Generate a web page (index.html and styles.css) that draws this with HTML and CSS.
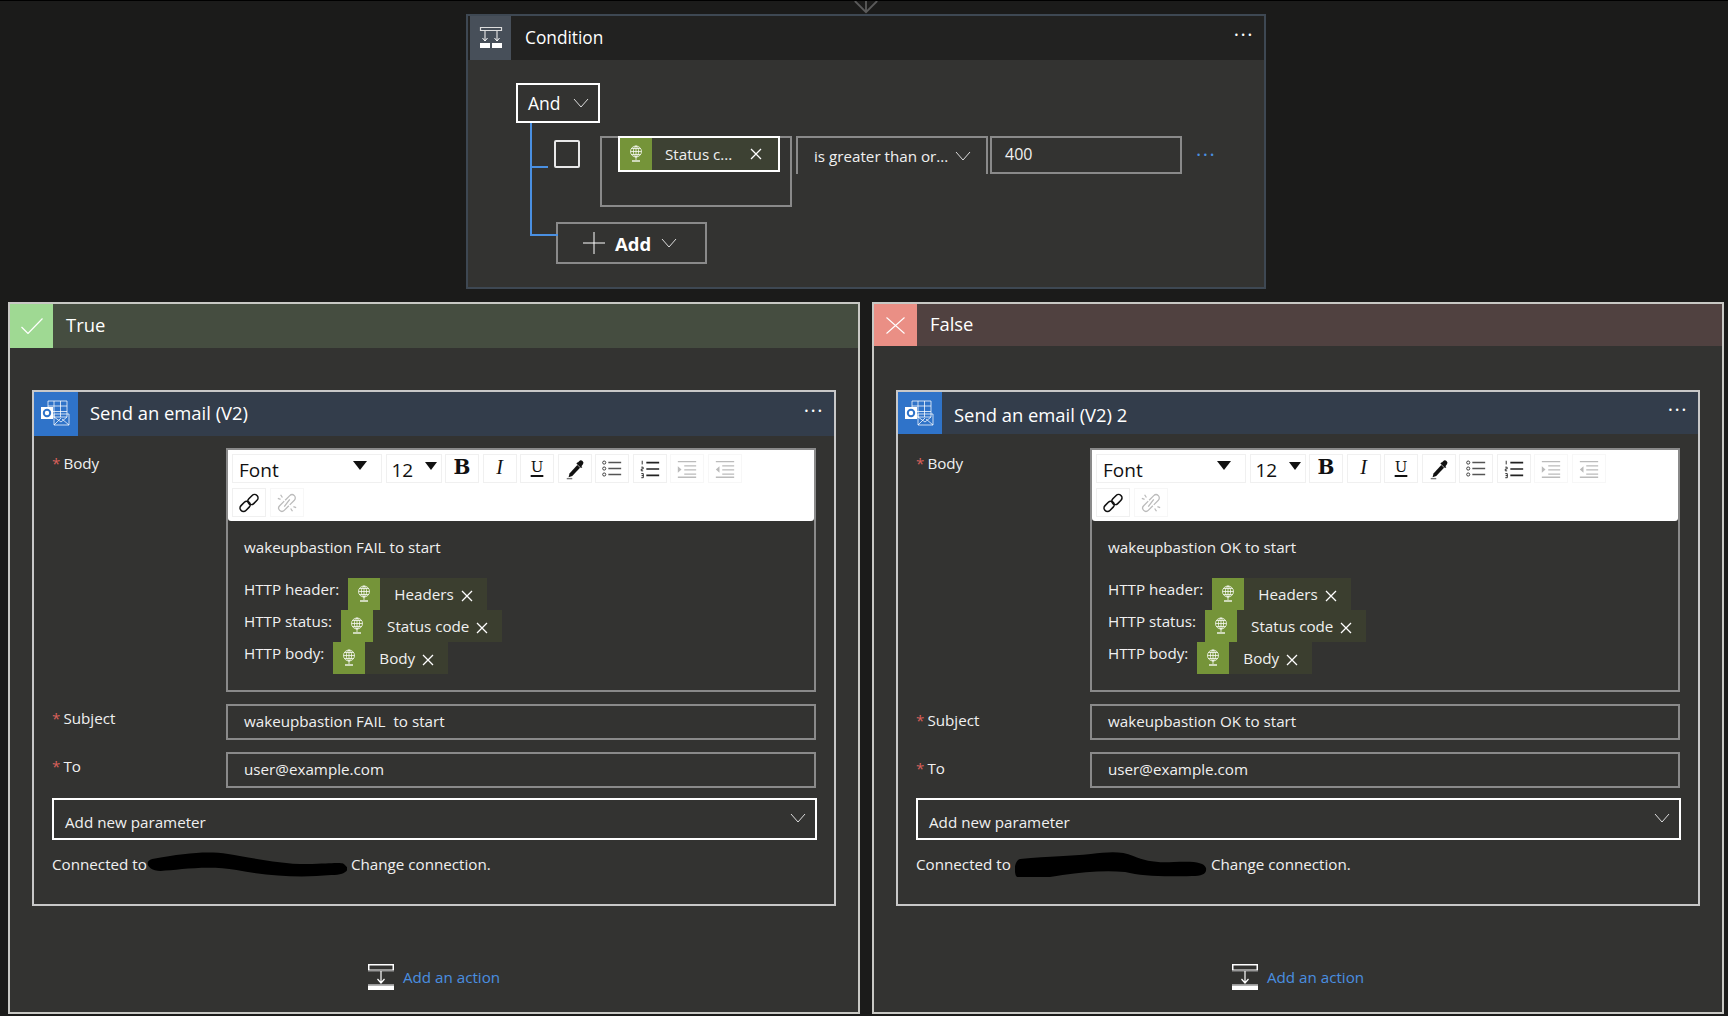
FILE: index.html
```html
<!DOCTYPE html>
<html>
<head>
    <title>Condition</title>
    <meta http-equiv="Content-Type" content="text/html;charset=utf-8"/>
    <link rel="stylesheet" href="styles.css">
</head>
<body>
<svg class="invisible">
    <symbol id="i-globe" viewBox="0 0 14 20"><g fill="none" stroke="currentColor" stroke-width=".75"><circle cx="7" cy="7.5" r="5.5"/><ellipse cx="7" cy="7.5" rx="2.6" ry="5.5"/><path d="M1.5 7.5h11M2.4 4.500h9.200M2.400 10.500h9.200M7 2v14"/><path d="M3 17h8" stroke-width="1.300"/></g></symbol>
    <symbol id="i-close" viewBox="0 0 12 12"><path d="M1 1l10 10M11 1L1 11" fill="none" stroke="currentColor" stroke-width="1.300"/></symbol>
    <symbol id="i-chevron" viewBox="0 0 16 10"><path d="M1 1l7 8 7-8" fill="none" stroke="currentColor" stroke-width="1"/></symbol>
    <symbol id="i-outlook" viewBox="0 0 44 42">
        <g fill="none" stroke="#fff" stroke-opacity=".75"><path d="M14 8h19v16H14zM20 8v16M26.500 8v16M14 13h19M14 18.500h19"/><path d="M20 21h15v11H20zM20 32l7-7M35 32l-7-6M33 24l-6 5-7-5"/></g>
        <rect x="7" y="14" width="12" height="12" fill="#fff"/>
        <circle cx="13" cy="20" r="3.200" fill="none" stroke="#2f73c9" stroke-width="2"/>
    </symbol>
    <symbol id="i-action" viewBox="0 0 26 26">
        <path d="M.75.75h24.500v5.500H.75z" fill="none" stroke="#fff" stroke-width="1.500"/>
        <path d="M0 6h26v1.500H0z" fill="#999"/>
        <path d="M13 7v12M9.500 15l3.500 4 3.500-4" fill="none" stroke="#fff" stroke-width="1.200"/>
        <path d="M0 20h26v1.500H0z" fill="#999"/>
        <path d="M0 21.500h26V26H0z" fill="#fff"/>
    </symbol>
    <symbol id="i-pen" viewBox="0 0 24 24"><path d="M14.500 7.500l3 3L9 19.500l-4 1.500 1-4z" fill="#111"/><path d="M15.500 4.500a2.400 2.400 0 0 1 1-1 2.500 2.500 0 0 1 4 3.500l-1.500 2 1 1-1.500 1-5-5 1-1z" fill="#111"/><path d="M3 22.500h6" stroke="#777" stroke-width="1.500"/></symbol>
    <symbol id="i-list" viewBox="0 0 24 24"><g fill="none" stroke="#333" stroke-width="1"><circle cx="3.500" cy="5" r="1.700"/><circle cx="3.500" cy="11.500" r="1.700"/><circle cx="3.500" cy="18" r="1.700"/></g><path d="M8 5h14M8 11.500h14M8 18h14" stroke="#555" stroke-width="1.600"/></symbol>
    <symbol id="i-numlist" viewBox="0 0 24 24"><path d="M3.500 3v4M2.500 10h2v2h-2v2h2M2.500 17h2.200v4.500H2.500M2.800 19.200h2" fill="none" stroke="#222" stroke-width="1"/><path d="M8 5h14M8 12h14M8 19h14" stroke="#222" stroke-width="1.800"/></symbol>
    <symbol id="i-indent" viewBox="0 0 24 24"><path d="M2 4h20M9 8.500h13M9 13h13M9 17.500h13M2 21h20" stroke="#bbb" stroke-width="1.400"/><path d="M2 9l4 3.500L2 16z" fill="#bbb"/></symbol>
    <symbol id="i-outdent" viewBox="0 0 24 24"><path d="M2 4h20M9 8.500h13M9 13h13M9 17.500h13M2 21h20" stroke="#bbb" stroke-width="1.400"/><path d="M6 9l-4 3.500L6 16z" fill="#bbb"/></symbol>
    <symbol id="i-link" viewBox="0 0 24 24"><g fill="none" stroke="currentColor" stroke-width="1.700"><rect x="1.500" y="12" width="12.500" height="7.500" rx="3.700" transform="rotate(-45 7.700 15.700)"/><rect x="10" y="4.500" width="12.500" height="7.500" rx="3.700" transform="rotate(-45 16.200 8.200)"/></g></symbol>
    <symbol id="i-unlink" viewBox="0 0 24 24"><g fill="none" stroke="currentColor" stroke-width="1.400"><path d="M9 10l-5 5a3.500 3.500 0 0 0 5 5l5-5"/><path d="M10 9l5-5a3.500 3.500 0 0 1 5 5l-5 5"/><path d="M5 3l2 3M2 7l3 1M18 21l-2-3M22 17l-3-1M15 8l-6 8"/></g></symbol>
</svg>

<div class="incoming"><svg class="incoming-arrow" viewBox="0 0 26 14"><path d="M1 0l12 12L25 0M13 0v12" fill="none" stroke="#5a5a5a" stroke-width="2"/></svg></div>

<div class="condition">
    <div class="condition-head">
        <div class="condition-icon">
            <svg viewBox="0 0 24 24" width="24" height="24"><path d="M1.500 1.500h21v3h-21zM6 4.500v10M18 4.500v10" fill="none" stroke="#ddd" stroke-width="1.200"/><path d="M3.500 12l2.500 3 2.500-3M15.500 12l2.500 3 2.500-3" fill="none" stroke="#fff" stroke-width="1"/><path d="M1 17h10v5H1zM13 17h10v5H13z" fill="#fff"/></svg>
        </div>
        <span class="head-title title-cond">Condition</span>
        <span class="more">&middot;&middot;&middot;</span>
    </div>
    <div class="condition-body">
        <div class="and-btn">And <svg class="chev"><use href="#i-chevron"/></svg></div>
        <div class="tree">
            <div class="tree-line"></div>
            <div class="tree-tick tick-row"></div>
            <div class="tree-tick tick-add"></div>
            <div class="rule">
                <div class="check"></div>
                <div class="rule-left">
                    <div class="token token-focus">
                        <span class="token-icon"><svg class="globe"><use href="#i-globe"/></svg></span>
                        <span class="token-text">Status c...</span>
                        <svg class="token-x"><use href="#i-close"/></svg>
                    </div>
                </div>
                <div class="rule-op">is greater than or... <svg class="chev"><use href="#i-chevron"/></svg></div>
                <div class="rule-value">400</div>
                <span class="more more-blue">&middot;&middot;&middot;</span>
            </div>
            <div class="add-btn">
                <svg class="plus" viewBox="0 0 22 22"><path d="M11 0v22M0 11h22" stroke="#fff" stroke-width="1"/></svg>
                <b>Add</b>
                <svg class="chev"><use href="#i-chevron"/></svg>
            </div>
        </div>
    </div>
</div>

<div class="branches">
    <div class="branch branch-true">
        <div class="branch-head">
            <div class="branch-icon"><svg viewBox="0 0 22 16" width="22" height="16"><path d="M.5 9l6.500 6.500L21.500.5" fill="none" stroke="#fff" stroke-width="1.200"/></svg></div>
            <span class="head-title">True</span>
        </div>
        <div class="card">
            <div class="card-head">
                <div class="card-icon"><svg class="outlook"><use href="#i-outlook"/></svg></div>
                <span class="head-title">Send an email (V2)</span>
                <span class="more">&middot;&middot;&middot;</span>
            </div>
            <div class="form">
                <label class="lbl lbl-body"><i>*</i>Body</label>
                <div class="editor">
                    <div class="toolbar">
                        <div class="tool-row">
                            <div class="tool tool-font">Font<span class="caret"></span></div>
                            <div class="tool tool-size">12<span class="caret"></span></div>
                            <div class="tool tool-b">B</div>
                            <div class="tool tool-i">I</div>
                            <div class="tool tool-u">U</div>
                            <div class="tool"><svg class="ico"><use href="#i-pen"/></svg></div>
                            <div class="tool"><svg class="ico"><use href="#i-list"/></svg></div>
                            <div class="tool"><svg class="ico"><use href="#i-numlist"/></svg></div>
                            <div class="tool tool-off"><svg class="ico"><use href="#i-indent"/></svg></div>
                            <div class="tool tool-off"><svg class="ico"><use href="#i-outdent"/></svg></div>
                        </div>
                        <div class="tool-row">
                            <div class="tool"><svg class="ico"><use href="#i-link"/></svg></div>
                            <div class="tool tool-off tool-grey"><svg class="ico"><use href="#i-unlink"/></svg></div>
                        </div>
                    </div>
                    <div class="editor-text">
                        <p>wakeupbastion FAIL to start</p>
                        <div class="http-row">HTTP header: <span class="token"><span class="token-icon"><svg class="globe"><use href="#i-globe"/></svg></span><span class="token-text">Headers</span><svg class="token-x"><use href="#i-close"/></svg></span></div>
                        <div class="http-row">HTTP status: <span class="token"><span class="token-icon"><svg class="globe"><use href="#i-globe"/></svg></span><span class="token-text">Status code</span><svg class="token-x"><use href="#i-close"/></svg></span></div>
                        <div class="http-row">HTTP body: <span class="token"><span class="token-icon"><svg class="globe"><use href="#i-globe"/></svg></span><span class="token-text">Body</span><svg class="token-x"><use href="#i-close"/></svg></span></div>
                    </div>
                </div>
                <label class="lbl"><i>*</i>Subject</label>
                <div class="field">wakeupbastion FAIL&nbsp; to start</div>
                <label class="lbl"><i>*</i>To</label>
                <div class="field">user@example.com</div>
            </div>
            <div class="param">Add new parameter <svg class="chev"><use href="#i-chevron"/></svg></div>
            <div class="conn">
                <span>Connected to</span>
                <svg class="scribble scribble-l" viewBox="3 0 190 26" preserveAspectRatio="none"><path d="M8 8C40 2 60 0 80 3s50 11 80 10 28-2 32 2-1 9-14 9c-30 3-60 1-90-5-28-5-55 0-72 1C3 20 0 10 8 8z" fill="#000"/></svg>
                <span>Change connection.</span>
            </div>
        </div>
        <div class="add-action"><svg class="action-ico"><use href="#i-action"/></svg><span>Add an action</span></div>
    </div>

    <div class="branch branch-false">
        <div class="branch-head">
            <div class="branch-icon"><svg viewBox="0 0 19 17" width="19" height="17"><path d="M.5.5l18 16M18.500.5L.5 16.500" fill="none" stroke="#fff" stroke-width="1.100"/></svg></div>
            <span class="head-title">False</span>
        </div>
        <div class="card">
            <div class="card-head">
                <div class="card-icon"><svg class="outlook"><use href="#i-outlook"/></svg></div>
                <span class="head-title">Send an email (V2) 2</span>
                <span class="more">&middot;&middot;&middot;</span>
            </div>
            <div class="form">
                <label class="lbl lbl-body"><i>*</i>Body</label>
                <div class="editor">
                    <div class="toolbar">
                        <div class="tool-row">
                            <div class="tool tool-font">Font<span class="caret"></span></div>
                            <div class="tool tool-size">12<span class="caret"></span></div>
                            <div class="tool tool-b">B</div>
                            <div class="tool tool-i">I</div>
                            <div class="tool tool-u">U</div>
                            <div class="tool"><svg class="ico"><use href="#i-pen"/></svg></div>
                            <div class="tool"><svg class="ico"><use href="#i-list"/></svg></div>
                            <div class="tool"><svg class="ico"><use href="#i-numlist"/></svg></div>
                            <div class="tool tool-off"><svg class="ico"><use href="#i-indent"/></svg></div>
                            <div class="tool tool-off"><svg class="ico"><use href="#i-outdent"/></svg></div>
                        </div>
                        <div class="tool-row">
                            <div class="tool"><svg class="ico"><use href="#i-link"/></svg></div>
                            <div class="tool tool-off tool-grey"><svg class="ico"><use href="#i-unlink"/></svg></div>
                        </div>
                    </div>
                    <div class="editor-text">
                        <p>wakeupbastion OK to start</p>
                        <div class="http-row">HTTP header: <span class="token"><span class="token-icon"><svg class="globe"><use href="#i-globe"/></svg></span><span class="token-text">Headers</span><svg class="token-x"><use href="#i-close"/></svg></span></div>
                        <div class="http-row">HTTP status: <span class="token"><span class="token-icon"><svg class="globe"><use href="#i-globe"/></svg></span><span class="token-text">Status code</span><svg class="token-x"><use href="#i-close"/></svg></span></div>
                        <div class="http-row">HTTP body: <span class="token"><span class="token-icon"><svg class="globe"><use href="#i-globe"/></svg></span><span class="token-text">Body</span><svg class="token-x"><use href="#i-close"/></svg></span></div>
                    </div>
                </div>
                <label class="lbl lbl-low"><i>*</i>Subject</label>
                <div class="field">wakeupbastion OK to start</div>
                <label class="lbl lbl-low"><i>*</i>To</label>
                <div class="field">user@example.com</div>
            </div>
            <div class="param">Add new parameter <svg class="chev"><use href="#i-chevron"/></svg></div>
            <div class="conn">
                <span>Connected to</span>
                <svg class="scribble scribble-r" viewBox="1 0 190 26" preserveAspectRatio="none"><path d="M6 8c30-3 50-3 70-5 18-2 30-3 42 2s22 7 40 6c20-1 30 0 32 6 1 6-4 8-14 8-30 1-50 0-66-4-20-2-40 0-62 3-16 3-42 6-46 1C0 20 0 10 6 8z" fill="#000"/></svg>
                <span>Change connection.</span>
            </div>
        </div>
        <div class="add-action"><svg class="action-ico"><use href="#i-action"/></svg><span>Add an action</span></div>
    </div>
</div>
</body>
</html>
```

FILE: styles.css
```css
html, body {
    margin: 0;
    height: 1016px;
    overflow: hidden;
}
body {
    font-family: "Open Sans", "Noto Sans", sans-serif;
    font-size: 15.2px;
    color: #f0f0f0;
    background-color: #1b1b1a;
    border-top: 1px solid #000;
    box-sizing: border-box;
}
.invisible {
    display: none;
}
.incoming {
    height: 13px;
    display: flex;
    justify-content: center;
    padding-left: 4px;
}
.incoming-arrow {
    width: 26px;
    height: 13px;
}
.head-title {
    font-size: 18.4px;
    color: #fff;
    margin-top: -3px;
}
.title-cond {
    font-size: 17.3px;
    margin-top: -2px;
}
.more {
    margin-left: auto;
    margin-top: -6px;
    font-size: 20px;
    line-height: 20px;
    letter-spacing: 1.500px;
    color: #fff;
}

/* condition card */
.condition {
    width: 800px;
    height: 275px;
    margin-left: 466px;
    box-sizing: border-box;
    border: 2px solid #3e4853;
    background: #333331;
}
.condition-head {
    height: 44px;
    display: flex;
    align-items: center;
    gap: 14px;
    padding-right: 10px;
    background: #222221;
}
.condition-icon {
    width: 41px;
    height: 44px;
    margin-left: 2px;
    display: flex;
    align-items: center;
    justify-content: center;
    background: #474f59;
}
.condition-body {
    padding: 23px 0 0 48px;
}
.chev {
    width: 16px;
    height: 10px;
    color: #ddd;
    flex: none;
}
.and-btn {
    width: 84px;
    height: 40px;
    box-sizing: border-box;
    border: 2px solid #fff;
    display: flex;
    align-items: center;
    justify-content: space-between;
    padding: 0 9px 0 10px;
    font-size: 17.5px;
    color: #fff;
}
.tree {
    position: relative;
    padding: 13px 0 0 38px;
}
.tree-line {
    position: absolute;
    left: 14px;
    top: 0;
    width: 2px;
    height: 112px;
    background: #4a90e2;
}
.tree-tick {
    position: absolute;
    left: 14px;
    height: 2px;
    background: #4a90e2;
}
.tick-row {
    top: 43px;
    width: 18px;
}
.tick-add {
    top: 111px;
    width: 28px;
}
.rule {
    display: flex;
    align-items: flex-start;
    height: 71px;
}
.check {
    width: 26px;
    height: 28px;
    margin-top: 4px;
    box-sizing: border-box;
    border: 2px solid #e8e8e8;
    border-radius: 2px;
}
.rule-left {
    width: 192px;
    height: 71px;
    margin-left: 20px;
    box-sizing: border-box;
    border: 2px solid #8a8a8a;
    padding-left: 16px;
}
.rule-op {
    width: 192px;
    height: 38px;
    margin-left: 4px;
    box-sizing: border-box;
    border: 2px solid #8a8a8a;
    border-bottom: 0;
    display: flex;
    align-items: center;
    justify-content: space-between;
    padding: 0 15px 0 16px;
    white-space: nowrap;
}
.rule-value {
    width: 192px;
    height: 38px;
    margin-left: 2px;
    box-sizing: border-box;
    border: 2px solid #8a8a8a;
    padding: 5px 13px;
    font-size: 16px;
}
.more-blue {
    margin-left: 14px;
    margin-top: 9px;
    color: #4a90e2;
}
.add-btn {
    width: 151px;
    height: 42px;
    margin: 15px 0 0 2px;
    box-sizing: border-box;
    border: 2px solid #8a8a8a;
    display: flex;
    align-items: center;
    padding-left: 25px;
    font-size: 18.5px;
    color: #fff;
}
.add-btn b {
    margin: 0 10px 0 10px;
}
.plus {
    width: 22px;
    height: 22px;
}

/* tokens */
.token {
    display: inline-flex;
    align-items: center;
    height: 32px;
    padding-right: 14px;
    background: #3b3e2f;
    color: #f0f0f0;
}
.token-icon {
    width: 32px;
    height: 32px;
    margin-right: 14px;
    display: flex;
    align-items: center;
    justify-content: center;
    background: #759439;
}
.globe {
    width: 14px;
    height: 20px;
    color: #fff;
}
.token-x {
    width: 12px;
    height: 12px;
    margin: 4px 0 0 7px;
    color: #fff;
}
.token-focus {
    width: 162px;
    height: 36px;
    margin-top: -2px;
    box-sizing: border-box;
    border: 2px solid #fff;
    padding-right: 0;
    background: #3d4133;
}
.token-focus .token-icon {
    margin-right: 13px;
}
.token-focus .token-x {
    margin: 0 0 0 18px;
}

/* true / false branches */
.branches {
    display: grid;
    grid-template-columns: 852px 852px;
    gap: 12px;
    margin: 13px 0 0 8px;
}
.branch {
    height: 712px;
    box-sizing: border-box;
    border: 2px solid #c8c8c4;
    background: #333331;
}
.branch-head {
    height: 44px;
    display: flex;
    align-items: center;
    gap: 13px;
}
.branch-icon {
    width: 43px;
    height: 100%;
    display: flex;
    align-items: center;
    justify-content: center;
}
.branch-true .branch-head {
    background: #454d40;
}
.branch-true .branch-icon {
    background: #9fd993;
}
.branch-false .branch-head {
    height: 42px;
    background: #504140;
}
.branch-false .branch-icon {
    background: #ea8f85;
}
.card {
    width: 804px;
    height: 516px;
    margin: 42px 0 0 22px;
    box-sizing: border-box;
    border: 2px solid #c8c8c8;
}
.branch-false .card {
    margin: 44px 0 0 22px;
}
.card-head {
    height: 44px;
    display: flex;
    align-items: center;
    gap: 12px;
    padding-right: 10px;
    background: #333d4b;
}
.card-icon {
    width: 44px;
    height: 100%;
    background: #2f73c9;
}
.outlook {
    width: 44px;
    height: 44px;
    display: block;
}
.branch-false .card-head {
    height: 42px;
}
.branch-false .card-head .head-title {
    margin-top: 2px;
}
.form {
    display: grid;
    grid-template-columns: 174px 590px;
    row-gap: 12px;
    padding: 12px 0 0 18px;
}
.branch-false .form {
    padding-top: 14px;
}
.lbl {
    padding-top: 4px;
}
.lbl-body {
    padding-top: 5px;
}
.lbl-low {
    padding-top: 6px;
}
.lbl i {
    font-style: normal;
    color: #d9605a;
    margin-right: 3px;
}
.field {
    height: 36px;
    box-sizing: border-box;
    border: 2px solid #8a8a8a;
    padding: 5px 16px;
    white-space: nowrap;
}

/* rich text editor */
.editor {
    height: 244px;
    box-sizing: border-box;
    border: 2px solid #8a8a8a;
}
.toolbar {
    height: 71px;
    box-sizing: border-box;
    padding: 4px 0 0 4px;
    background: #fff;
    border-radius: 0 0 3px 3px;
    color: #111;
}
.tool-row {
    display: flex;
    gap: 3.500px;
    height: 30px;
    margin-bottom: 4px;
}
.tool {
    width: 34px;
    height: 29px;
    box-sizing: border-box;
    border: 1px solid #f0f0f0;
    display: flex;
    align-items: center;
    justify-content: center;
}
.tool-off {
    border-color: #f7f7f7;
}
.tool-grey {
    color: #bbb;
}
.tool-font {
    width: 150px;
    justify-content: space-between;
    padding: 2px 14px 0 6px;
    font-size: 19px;
}
.tool-size {
    width: 56px;
    justify-content: space-between;
    padding: 2px 4px 0 5px;
    font-size: 19px;
}
.caret {
    width: 0;
    height: 0;
    margin-bottom: 8px;
    border-left: 7px solid transparent;
    border-right: 7px solid transparent;
    border-top: 9px solid #111;
}
.tool-size .caret {
    border-left-width: 6px;
    border-right-width: 6px;
    border-top-width: 8px;
}
.tool-b {
    font-family: "DejaVu Serif", serif;
    font-weight: 700;
    font-size: 20px;
    padding-bottom: 3px;
}
.tool-i {
    font-family: "Liberation Serif", serif;
    font-style: italic;
    font-size: 20px;
    padding-bottom: 3px;
}
.tool-u {
    font-family: "DejaVu Serif", serif;
    font-size: 15px;
    text-decoration: underline;
    text-decoration-thickness: 2px;
    text-underline-offset: 3px;
    padding-bottom: 4px;
}
.ico {
    width: 22px;
    height: 22px;
}
.editor-text {
    padding-top: 16px;
}
.editor-text p {
    margin: 0 0 21px 16px;
    line-height: 20px;
}
.http-row {
    display: flex;
    gap: 9px;
    height: 32px;
    padding-left: 16px;
    line-height: 22px;
}

/* bottom of the card */
.param {
    width: 765px;
    height: 42px;
    margin: 10px 0 0 18px;
    box-sizing: border-box;
    border: 2px solid #fff;
    display: flex;
    align-items: center;
    justify-content: space-between;
    padding: 5px 9px 0 11px;
}
.param .chev {
    margin-top: -7px;
}
.conn {
    display: flex;
    align-items: center;
    height: 26px;
    margin: 11px 0 0 18px;
}
.scribble {
    height: 26px;
    flex: none;
}
.scribble-l {
    width: 200px;
    margin: 0 4px 0 0;
}
.scribble-r {
    width: 192px;
    margin: 0 4px 0 4px;
}
.add-action {
    display: flex;
    justify-content: center;
    align-items: center;
    gap: 9px;
    margin-top: 58px;
    color: #4a8fe0;
}
.action-ico {
    width: 26px;
    height: 26px;
}
```
